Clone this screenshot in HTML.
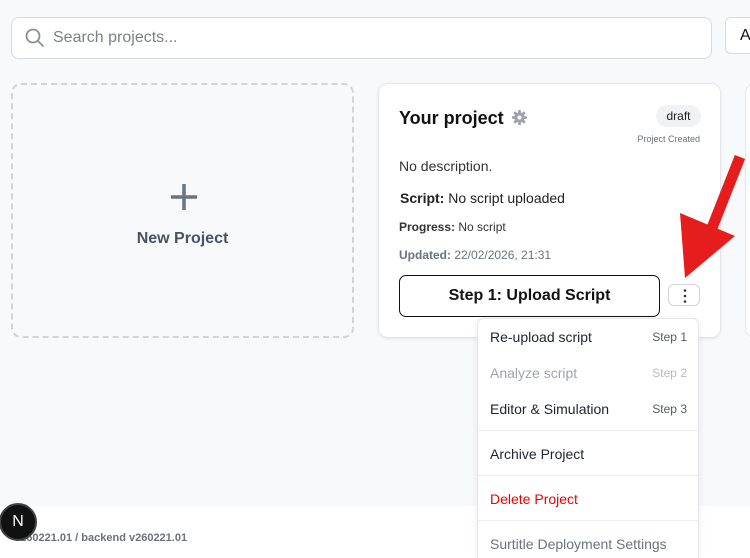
<!DOCTYPE html>
<html style="overflow:hidden;height:558px"><head><style>
*{box-sizing:border-box;margin:0;padding:0}
html,body{width:750px;height:558px;overflow:hidden}
body{background:#f8f9fb;font-family:"Liberation Sans",sans-serif;position:relative}
.abs{position:absolute}
.search{left:11px;top:17px;width:701px;height:42px;border:1px solid #d6d9de;border-radius:8px;background:#fff}
.search span{position:absolute;left:41px;top:11px;font-size:16px;color:#7b8088}
.btn2{left:725px;top:17px;width:60px;height:37px;border:1px solid #d6d9de;border-radius:6px;background:#fff;font-size:16px;padding:9px 14px;color:#111}
.newp{left:11px;top:83px;width:343px;height:255px;border:2px dashed #d1d4d9;border-radius:10px}
.card{left:378px;top:83px;width:343px;height:255px;background:#fff;border:1px solid #e4e6ea;border-radius:10px;box-shadow:0 1px 3px rgba(0,0,0,.08)}
.card2{left:745px;top:83px;width:40px;height:255px;background:#fff;border:1px solid #e4e6ea;border-radius:10px}
.footer{left:0;top:506px;width:750px;height:52px;background:#fff}
.menu{left:477px;top:318px;width:222px;height:240px;background:#fff;border:1px solid #e4e6ea;border-bottom:none;border-radius:6px 6px 0 0;box-shadow:0 2px 8px rgba(0,0,0,.08)}
.mi{position:absolute;left:12px;font-size:14px;color:#1d2330}
.st{position:absolute;right:11px;font-size:12px;color:#555b65}
.sep{position:absolute;left:0;width:220px;height:1px;background:#eceef1}
</style></head><body>
<div class="abs search">
<svg class="abs" style="left:13px;top:10px" width="20" height="20" viewBox="0 0 20 20"><circle cx="8" cy="8" r="6.5" fill="none" stroke="#8a8f97" stroke-width="1.8"/><line x1="12.8" y1="12.8" x2="18" y2="18" stroke="#8a8f97" stroke-width="1.8" stroke-linecap="round"/></svg>
<span>Search projects...</span></div>
<div class="abs btn2">A</div>
<div class="abs newp">
<svg class="abs" style="left:156px;top:97px" width="30" height="30"><line x1="15" y1="2" x2="15" y2="28" stroke="#6b7280" stroke-width="3.5"/><line x1="2" y1="15" x2="28" y2="15" stroke="#6b7280" stroke-width="3.5"/></svg>
<div class="abs" style="left:0;width:339px;top:145px;text-align:center;font-size:16px;font-weight:bold;color:#4b5260">New Project</div></div>
<div class="abs card">
<div class="abs" style="left:20px;top:24px;font-size:18px;font-weight:bold;color:#111">Your project</div>
<svg class="abs" style="left:133px;top:26px" width="15" height="15" viewBox="0 0 16 16"><g fill="#9ca3af"><circle cx="8" cy="8" r="5.5"/><rect x="6.5" y="0" width="3" height="16" rx="1"/><rect x="0" y="6.5" width="16" height="3" rx="1"/><rect x="6.5" y="0" width="3" height="16" rx="1" transform="rotate(45 8 8)"/><rect x="6.5" y="0" width="3" height="16" rx="1" transform="rotate(-45 8 8)"/></g><circle cx="8" cy="8" r="2.2" fill="#fff"/></svg>
<div class="abs" style="left:277px;top:21px;width:45px;height:22px;border-radius:11px;background:#f1f2f4;font-size:12px;text-align:center;line-height:22px;color:#222">draft</div>
<div class="abs" style="right:20px;top:50px;font-size:9px;color:#6b7280">Project Created</div>
<div class="abs" style="left:20px;top:74px;font-size:14px;color:#333">No description.</div>
<div class="abs" style="left:21px;top:106px;font-size:14px;color:#222"><b>Script:</b> No script uploaded</div>
<div class="abs" style="left:20px;top:136px;font-size:12px;color:#333"><b>Progress:</b> No script</div>
<div class="abs" style="left:20px;top:164px;font-size:12px;color:#6b7280"><b>Updated:</b> 22/02/2026, 21:31</div>
<div class="abs" style="left:20px;top:191px;width:261px;height:42px;border:1px solid #111;border-radius:7px;text-align:center;line-height:40px;font-size:16px;font-weight:bold;color:#111">Step 1: Upload Script</div>
<div class="abs" style="left:289px;top:200px;width:32px;height:22px;border:1px solid #d1d4d9;border-radius:6px"><svg class="abs" style="left:14px;top:3px" width="4" height="16"><circle cx="2" cy="2.5" r="1.3" fill="#333"/><circle cx="2" cy="8" r="1.3" fill="#333"/><circle cx="2" cy="13.5" r="1.3" fill="#333"/></svg></div>
</div>
<div class="abs card2"></div>
<div class="abs footer"><div class="abs" style="left:14px;top:26px;font-size:11px;font-weight:bold;color:#6b7280">v260221.01 / backend v260221.01</div></div>
<div class="abs" style="left:-1px;top:503px;width:38px;height:38px;border-radius:50%;background:#111;border:2px solid #444;color:#fff;font-size:16px;text-align:center;line-height:34px">N</div>
<div class="abs menu">
<div class="mi" style="top:10px">Re-upload script</div><div class="st" style="top:11px">Step 1</div>
<div class="mi" style="top:46px;color:#9ca3af">Analyze script</div><div class="st" style="top:47px;color:#b5b9c0">Step 2</div>
<div class="mi" style="top:82px">Editor &amp; Simulation</div><div class="st" style="top:83px">Step 3</div>
<div class="sep" style="top:111px"></div>
<div class="mi" style="top:127px">Archive Project</div>
<div class="sep" style="top:156px"></div>
<div class="mi" style="top:172px;color:#e00">Delete Project</div>
<div class="sep" style="top:201px"></div>
<div class="mi" style="top:217px;color:#6b7280">Surtitle Deployment Settings</div>
</div>
<svg class="abs" style="left:0;top:0" width="750" height="558"><line x1="740" y1="157" x2="712" y2="228" stroke="#e51d1d" stroke-width="11"/><polygon points="680,213 735,236 685,278" fill="#e51d1d"/></svg>
</body></html>
